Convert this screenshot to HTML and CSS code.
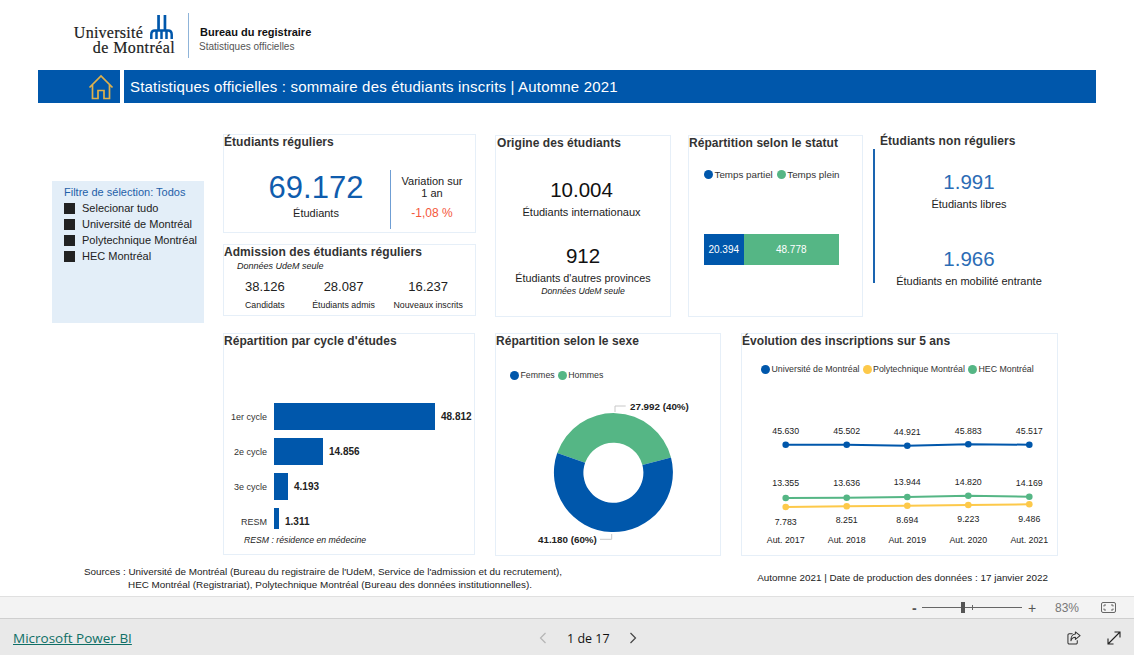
FILE: index.html
```html
<!DOCTYPE html>
<html lang="fr">
<head>
<meta charset="utf-8">
<title>Statistiques officielles</title>
<link rel="stylesheet" href="styles.css">
</head>
<body>
<div class="app">
  <main class="report">
    <header class="brand">
      <div class="logo">
        <div class="logo-top">
          <span class="logo-text">Université</span>
          <svg class="logo-mark" viewBox="0 0 25 24" aria-hidden="true">
            <path fill="#0057ab" d="M8.200 0h2.700v16h-2.700zM14.600 0h2.700v16h-2.700z"/>
            <g fill="none" stroke="#0057ab" stroke-width="2.500">
              <path d="M2.300 24V19.500C2.300 17 4 15.500 6 15.500H19C21 15.500 22.700 17 22.700 19.500V24"/>
              <path d="M7.500 24V16M12.500 24V16M17.500 24V16"/>
            </g>
          </svg>
        </div>
        <div class="logo-text logo-second">de Montréal</div>
      </div>
      <div class="brand-text">
        <div class="brand-name">Bureau du registraire</div>
        <div class="brand-sub">Statistiques officielles</div>
      </div>
    </header>

    <div class="banner">
      <div class="home">
        <svg class="home-icon" viewBox="0 0 26 26" aria-hidden="true">
          <path fill="none" stroke="#dfb14b" stroke-width="1.700" d="M1.500 13.500 13 2l11.500 11.500M4.500 11v13.500h5.500v-8h6v8h5.500V11"/>
        </svg>
      </div>
      <h1 class="banner-title">Statistiques officielles : sommaire des étudiants inscrits | Automne 2021</h1>
    </div>

    <section class="row-top">
      <aside class="filter">
        <div class="filter-title">Filtre de sélection: Todos</div>
        <div class="filter-item"><span class="check"></span>Selecionar tudo</div>
        <div class="filter-item"><span class="check"></span>Université de Montréal</div>
        <div class="filter-item"><span class="check"></span>Polytechnique Montréal</div>
        <div class="filter-item"><span class="check"></span>HEC Montréal</div>
      </aside>

      <div class="stack">
        <article class="card card-regular">
          <h2 class="card-title">Étudiants réguliers</h2>
          <div class="regular-body">
            <div class="regular-main">
              <div class="big-value">69.172</div>
              <div class="label">Étudiants</div>
            </div>
            <div class="regular-side">
              <div class="label">Variation sur<br>1 an</div>
              <div class="delta">-1,08 %</div>
            </div>
          </div>
        </article>
        <article class="card card-admission">
          <h2 class="card-title">Admission des étudiants réguliers</h2>
          <div class="note note-indent">Données UdeM seule</div>
          <div class="admission-grid">
            <div class="admission-col col-a"><div class="mid-value">38.126</div><div class="small-label">Candidats</div></div>
            <div class="admission-col col-b"><div class="mid-value">28.087</div><div class="small-label">Étudiants admis</div></div>
            <div class="admission-col col-c"><div class="mid-value">16.237</div><div class="small-label">Nouveaux inscrits</div></div>
          </div>
        </article>
      </div>

      <article class="card card-origin">
        <h2 class="card-title">Origine des étudiants</h2>
        <div class="kpi kpi-first"><div class="kpi-value">10.004</div><div class="label">Étudiants internationaux</div></div>
        <div class="kpi kpi-second"><div class="kpi-value">912</div><div class="label">Étudiants d'autres provinces</div><div class="note">Données UdeM seule</div></div>
      </article>

      <article class="card card-status">
        <h2 class="card-title">Répartition selon le statut</h2>
        <div class="legend legend-status">
          <span class="legend-item"><i class="dot dot-blue"></i>Temps partiel</span>
          <span class="legend-item"><i class="dot dot-green"></i>Temps plein</span>
        </div>
        <div class="stacked">
          <div class="seg seg-blue">20.394</div>
          <div class="seg seg-green">48.778</div>
        </div>
      </article>

      <article class="nonreg">
        <h2 class="card-title nonreg-title">Étudiants non réguliers</h2>
        <div class="nonreg-body">
          <div class="kpi-nr kpi-nr-first"><div class="kpi-value blue">1.991</div><div class="label">Étudiants libres</div></div>
          <div class="kpi-nr kpi-nr-second"><div class="kpi-value blue">1.966</div><div class="label">Étudiants en mobilité entrante</div></div>
        </div>
      </article>
    </section>

    <section class="row-bottom">
      <article class="card card-cycle">
        <h2 class="card-title">Répartition par cycle d'études</h2>
        <div class="bars">
          <div class="bar-row"><span class="bar-label">1er cycle</span><span class="bar bar-1"></span><b class="bar-value">48.812</b></div>
          <div class="bar-row"><span class="bar-label">2e cycle</span><span class="bar bar-2"></span><b class="bar-value">14.856</b></div>
          <div class="bar-row"><span class="bar-label">3e cycle</span><span class="bar bar-3"></span><b class="bar-value">4.193</b></div>
          <div class="bar-row"><span class="bar-label">RESM</span><span class="bar bar-4"></span><b class="bar-value">1.311</b></div>
        </div>
        <div class="note resm-note">RESM : résidence en médecine</div>
      </article>

      <article class="card card-sex">
        <h2 class="card-title">Répartition selon le sexe</h2>
        <div class="legend legend-sex">
          <span class="legend-item"><i class="dot dot-blue"></i>Femmes</span>
          <span class="legend-item"><i class="dot dot-green"></i>Hommes</span>
        </div>
        <svg class="chart" viewBox="0 0 224 175" width="224" height="175">
          <g transform="translate(117.400 91.700)">
            <path fill="#55b685" d="M-56.200-19.600A59.500 59.500 0 0 1 57.600-15.100L29-7.600A30 30 0 0 0-28.300-9.900Z"/>
            <path fill="#0057ab" d="M57.600-15.100A59.500 59.500 0 1 1-56.200-19.600L-28.300-9.900A30 30 0 1 0 29-7.600Z"/>
          </g>
          <path class="leader" d="M119 31V25H129.700"/>
          <path class="leader" d="M115.700 153V158.300H104"/>
          <text class="chart-bold" x="134" y="28.500">27.992 (40%)</text>
          <text class="chart-bold" x="42" y="161.500">41.180 (60%)</text>
        </svg>
      </article>

      <article class="card card-trend">
        <h2 class="card-title">Évolution des inscriptions sur 5 ans</h2>
        <div class="legend legend-trend">
          <span class="legend-item"><i class="dot dot-blue"></i>Université de Montréal</span>
          <span class="legend-item"><i class="dot dot-yellow"></i>Polytechnique Montréal</span>
          <span class="legend-item"><i class="dot dot-green"></i>HEC Montréal</span>
        </div>
        <svg class="chart" viewBox="0 0 315 175" width="315" height="175">
          <polyline class="line" stroke="#0057ab" points="43.700,64.700 104.700,64.700 165.300,65.700 226.300,64.300 287.300,64.700"/>
          <polyline class="line" stroke="#55b685" points="43.700,118 104.700,117.700 165.300,117 226.300,115.700 287.300,116.700"/>
          <polyline class="line" stroke="#fdc94a" points="43.700,127 104.700,126.300 165.300,125.700 226.300,125 287.300,124.300"/>
          <g fill="#0057ab"><circle cx="43.700" cy="64.700" r="3.300"/><circle cx="104.700" cy="64.700" r="3.300"/><circle cx="165.300" cy="65.700" r="3.300"/><circle cx="226.300" cy="64.300" r="3.300"/><circle cx="287.300" cy="64.700" r="3.300"/></g>
          <g fill="#55b685"><circle cx="43.700" cy="118" r="3.300"/><circle cx="104.700" cy="117.700" r="3.300"/><circle cx="165.300" cy="117" r="3.300"/><circle cx="226.300" cy="115.700" r="3.300"/><circle cx="287.300" cy="116.700" r="3.300"/></g>
          <g fill="#fdc94a"><circle cx="43.700" cy="127" r="3.300"/><circle cx="104.700" cy="126.300" r="3.300"/><circle cx="165.300" cy="125.700" r="3.300"/><circle cx="226.300" cy="125" r="3.300"/><circle cx="287.300" cy="124.300" r="3.300"/></g>
          <g class="chart-text">
            <text x="43.700" y="53.700">45.630</text><text x="104.700" y="53.700">45.502</text><text x="165.300" y="54.700">44.921</text><text x="226.300" y="53.700">45.883</text><text x="287.300" y="53.700">45.517</text>
            <text x="43.700" y="106.300">13.355</text><text x="104.700" y="106.300">13.636</text><text x="165.300" y="105.300">13.944</text><text x="226.300" y="104.700">14.820</text><text x="287.300" y="105.700">14.169</text>
            <text x="43.700" y="144.700">7.783</text><text x="104.700" y="143.300">8.251</text><text x="165.300" y="142.700">8.694</text><text x="226.300" y="142.300">9.223</text><text x="287.300" y="141.700">9.486</text>
            <text x="43.700" y="163.300">Aut. 2017</text><text x="104.700" y="163.300">Aut. 2018</text><text x="165.300" y="163.300">Aut. 2019</text><text x="226.300" y="163.300">Aut. 2020</text><text x="287.300" y="163.300">Aut. 2021</text>
          </g>
        </svg>
      </article>
    </section>

    <footer class="sources">
      <div class="sources-left">
        <div>Sources : Université de Montréal (Bureau du registraire de l'UdeM, Service de l'admission et du recrutement),</div>
        <div class="sources-cont">HEC Montréal (Registrariat), Polytechnique Montréal (Bureau des données institutionnelles).</div>
      </div>
      <div class="sources-right">Automne 2021 | Date de production des données : 17 janvier 2022</div>
    </footer>
  </main>

  <div class="zoombar">
    <span class="zoom-btn zoom-minus">-</span>
    <span class="slider"><span class="slider-tick"></span><span class="slider-thumb"></span></span>
    <span class="zoom-btn zoom-plus">+</span>
    <span class="zoom-pct">83%</span>
    <svg class="fit-icon" viewBox="0 0 15 11" aria-hidden="true">
      <rect x="0.500" y="0.500" width="14" height="10" rx="1.500" fill="none" stroke="#666"/>
      <path d="M3 4.500V3H5M10 3H12V4.500M12 6.500V8H10M5 8H3V6.500" fill="none" stroke="#666"/>
    </svg>
  </div>

  <div class="pbibar">
    <a class="pbi-link" href="#">Microsoft Power BI</a>
    <nav class="pager">
      <svg class="chev" viewBox="0 0 8 12" aria-hidden="true"><path d="M6.500 1 1.500 6l5 5" fill="none" stroke="#b5b5b5" stroke-width="1.200"/></svg>
      <span class="pager-text">1 de 17</span>
      <svg class="chev" viewBox="0 0 8 12" aria-hidden="true"><path d="M1.500 1l5 5-5 5" fill="none" stroke="#444" stroke-width="1.200"/></svg>
    </nav>
    <div class="pbi-actions">
      <svg class="act-icon" viewBox="0 0 15 15" aria-hidden="true"><path d="M6 3H2.500A1.500 1.500 0 0 0 1 4.500v8A1.500 1.500 0 0 0 2.500 14h7a1.500 1.500 0 0 0 1.500-1.500V10" fill="none" stroke="#333" stroke-width="1.100"/><path d="M9 1l5 4-5 4V6.700C6.500 6.700 5 8 4.200 10.500 4 7 5.500 3.500 9 3.300Z" fill="none" stroke="#333" stroke-width="1.100" stroke-linejoin="round"/></svg>
      <svg class="act-icon" viewBox="0 0 14 14" aria-hidden="true"><path d="M1 13 13 1M7.500 1H13V6.500M1 7.500V13H6.500" fill="none" stroke="#222" stroke-width="1.100"/></svg>
    </div>
  </div>
</div>
</body>
</html>
```
FILE: styles.css
```css
* { box-sizing: border-box; }
html, body { margin: 0; padding: 0; }
body { font-family: "Liberation Sans", Arial, sans-serif; color: #222; background: #fff; overflow: hidden; }
.app { width: 1134px; height: 655px; display: flex; flex-direction: column; overflow: hidden; }
.report { height: 596px; flex: none; display: flex; flex-direction: column; }

/* brand */
.brand { height: 70px; flex: none; display: flex; padding: 13px 0 12px 74px; }
.logo { width: 100px; display: flex; flex-direction: column; align-items: flex-end; margin-top: 1px; }
.logo-top { display: flex; align-items: flex-end; height: 25px; }
.logo-text { font-family: "Liberation Serif", serif; font-size: 16px; line-height: 14px; color: #1c1c1c; letter-spacing: .25px; -webkit-text-stroke: .2px #1c1c1c; }
.logo-top .logo-text { margin-right: 6px; margin-bottom: -1px; }
.logo-mark { width: 25px; height: 24px; flex: none; }
.logo-second { margin-top: 2px; margin-right: -1px; letter-spacing: .4px; }
.brand-text { margin-left: 14px; border-left: 1px solid #8fb4d9; padding: 12px 0 0 11px; }
.brand-name { font-size: 11px; font-weight: bold; color: #111; line-height: 14px; }
.brand-sub { font-size: 10px; color: #555; line-height: 13px; margin-top: 1px; margin-left: -1px; }

/* banner */
.banner { height: 33px; flex: none; display: flex; gap: 4px; margin-left: 38px; width: 1058px; }
.home { width: 82px; background: #0057ab; display: flex; align-items: center; justify-content: flex-end; padding-right: 6px; }
.home-icon { width: 26px; height: 26px; }
.banner-title { flex: 1; margin: 0; background: #0057ab; color: #fff; font-size: 15px; font-weight: normal; line-height: 33px; padding-left: 6px; letter-spacing: .18px; white-space: nowrap; }

/* rows */
.row-top { height: 189px; flex: none; margin-top: 31px; display: flex; align-items: flex-start; }
.row-bottom { height: 223px; flex: none; margin-top: 10px; margin-left: 223px; display: flex; gap: 20px; }

.card { border: 1px solid #e6eff8; background: #fff; display: flex; flex-direction: column; }
.card-title { margin: 0; font-size: 12px; font-weight: bold; line-height: 14px; color: #333; letter-spacing: .06px; }

/* filter */
.filter { width: 152px; height: 142px; margin: 47px 0 0 52px; background: #e3eef8; padding: 5px 0 0 12px; font-size: 11px; line-height: 16px; flex: none; }
.filter-title { color: #1f60a8; height: 14px; line-height: 12px; }
.filter-item { display: flex; align-items: center; color: #222; white-space: nowrap; }
.check { width: 11px; height: 11px; background: #222; margin-right: 7px; flex: none; }

/* first column */
.stack { width: 253px; margin-left: 19px; flex: none; display: flex; flex-direction: column; gap: 11px; }
.card-regular { height: 99px; }
.regular-body { display: flex; padding-top: 21px; }
.regular-main { width: 166px; padding-left: 18px; text-align: center; }
.big-value { font-size: 31px; line-height: 36px; color: #0f5cad; }
.label { font-size: 11px; line-height: 12px; color: #222; white-space: nowrap; }
.regular-main .label { margin-top: 1px; }
.regular-side { flex: 1; height: 59px; border-left: 1.500px solid #6f9ed4; text-align: center; padding: 5px 2px 0 0; }
.delta { color: #f4573c; font-size: 12px; line-height: 14px; margin-top: 7px; }
.card-admission { height: 72px; }
.note { font-size: 9px; font-style: italic; line-height: 11px; color: #222; }
.note-indent { padding-left: 13px; margin-top: 2px; }
.admission-grid { display: flex; margin-top: 7px; }
.admission-col { text-align: center; white-space: nowrap; }
.col-a { width: 82px; }
.col-b { width: 76px; }
.col-c { width: 94px; }
.mid-value { font-size: 13px; line-height: 16px; color: #222; }
.small-label { font-size: 8.800px; line-height: 11px; margin-top: 5px; color: #222; }

/* origin */
.card-origin { width: 176px; height: 182px; margin: 1px 0 0 19px; flex: none; }
.card-origin .card-title { padding-left: 1px; }
.kpi { text-align: center; }
.kpi-first { margin-top: 28px; padding-right: 3px; }
.kpi-second { margin-top: 26px; }
.kpi-second .label { font-size: 10.800px; }
.kpi-second .note { font-size: 8.700px; }
.kpi-value { font-size: 20.500px; line-height: 24px; color: #111; }
.kpi .label { margin-top: 4px; }
.kpi .note { margin-top: 2px; }

/* status */
.card-status { width: 175px; height: 182px; margin: 1px 0 0 17px; flex: none; }
.legend { display: flex; font-size: 8.800px; line-height: 11px; color: #333; white-space: nowrap; }
.legend-item { display: flex; align-items: center; }
.dot { width: 9px; height: 9px; border-radius: 50%; margin-right: 1.500px; flex: none; }
.dot-blue { background: #0057ab; }
.dot-green { background: #55b685; }
.dot-yellow { background: #fdc94a; }
.legend-status { gap: 4px; margin: 19px 0 0 15px; font-size: 9.800px; }
.stacked { display: flex; margin: 54px 0 0 15px; width: 135px; height: 31px; color: #fff; font-size: 10px; line-height: 31px; text-align: center; }
.seg-blue { width: 39.500px; background: #0057ab; }
.seg-green { flex: 1; background: #55b685; }

/* non regular */
.nonreg { width: 200px; margin-left: 10px; flex: none; }
.nonreg-title { padding-left: 7px; }
.nonreg-body { margin-top: 1px; height: 134px; border-left: 2px solid #1a64b0; padding-top: 21px; }
.kpi-nr { text-align: center; width: 188px; }
.kpi-nr-second { margin-top: 37px; }
.blue { color: #2b6cb5; }
.kpi-nr .label { margin-top: 4px; }

/* cycle */
.card-cycle { width: 252px; height: 222px; }
.bars { margin-top: 55px; display: flex; flex-direction: column; gap: 8px; }
.bar-row { display: flex; align-items: center; height: 27px; }
.bar-label { width: 43px; margin-right: 7px; text-align: right; font-size: 9px; color: #333; flex: none; }
.bar { display: block; height: 100%; background: #0057ab; margin-right: 6px; flex: none; }
.bar-1 { width: 161px; }
.bar-2 { width: 49px; }
.bar-3 { width: 14px; }
.bar-4 { width: 5px; height: 21px; align-self: flex-start; }
.bar-value { font-size: 10px; color: #222; }
.resm-note { margin: 0 0 0 20px; font-size: 8.700px; }

/* sex + trend */
.card-sex { width: 226px; }
.card-trend { width: 317px; }
.chart { display: block; margin-top: auto; flex: none; }
.legend-sex { margin: 22px 0 0 14px; gap: 3px; }
.legend-trend { margin: 16px 0 0 19px; gap: 3px; }
.leader { fill: none; stroke: #c8c8c8; stroke-width: 1; }
.chart-bold { font-size: 9.800px; font-weight: bold; fill: #222; }
.line { fill: none; stroke-width: 2; }
.chart-text text { font-size: 8.800px; fill: #222; text-anchor: middle; }

/* sources */
.sources { display: flex; justify-content: space-between; padding: 9px 86px 0 84px; font-size: 9.900px; line-height: 13px; color: #222; }
.sources-cont { padding-left: 44px; }
.sources-right { padding-top: 6px; }

/* zoom bar */
.zoombar { height: 22px; flex: none; background: #f3f3f3; border-top: 1px solid #e0e0e0; display: flex; align-items: center; padding-left: 912px; color: #666; }
.zoom-btn { font-size: 14px; line-height: 20px; color: #555; }
.zoom-minus { width: 10px; font-weight: bold; }
.slider { position: relative; width: 100px; height: 1px; background: #666; }
.slider-thumb { position: absolute; left: 39px; top: -5px; width: 4px; height: 11px; background: #555; }
.slider-tick { position: absolute; left: 50px; top: -2px; width: 1px; height: 5px; background: #666; }
.zoom-plus { margin-left: 6px; width: 11px; }
.zoom-pct { margin-left: 16px; font-size: 12px; color: #777; width: 24px; }
.fit-icon { width: 15px; height: 11px; margin-left: 22px; }

/* footer bar */
.pbibar { height: 37px; flex: none; background: #e9e9e9; border-top: 1px solid #cfcfcf; display: flex; align-items: center; position: relative; padding: 2px 13px 0 13px; }
.pbi-link { font-family: "Open Sans", sans-serif; font-size: 13.500px; color: #0f6f66; text-decoration: underline; }
.pager { position: absolute; left: 539px; top: 1px; height: 36px; display: flex; align-items: center; }
.chev { width: 8px; height: 12px; flex: none; }
.pager-text { font-family: "Open Sans", sans-serif; font-size: 12.500px; color: #111; width: 42px; margin: 0 20px; text-align: center; white-space: nowrap; }
.pbi-actions { margin-left: auto; display: flex; gap: 26px; align-items: center; }
.act-icon { width: 14px; height: 14px; display: block; }
```
